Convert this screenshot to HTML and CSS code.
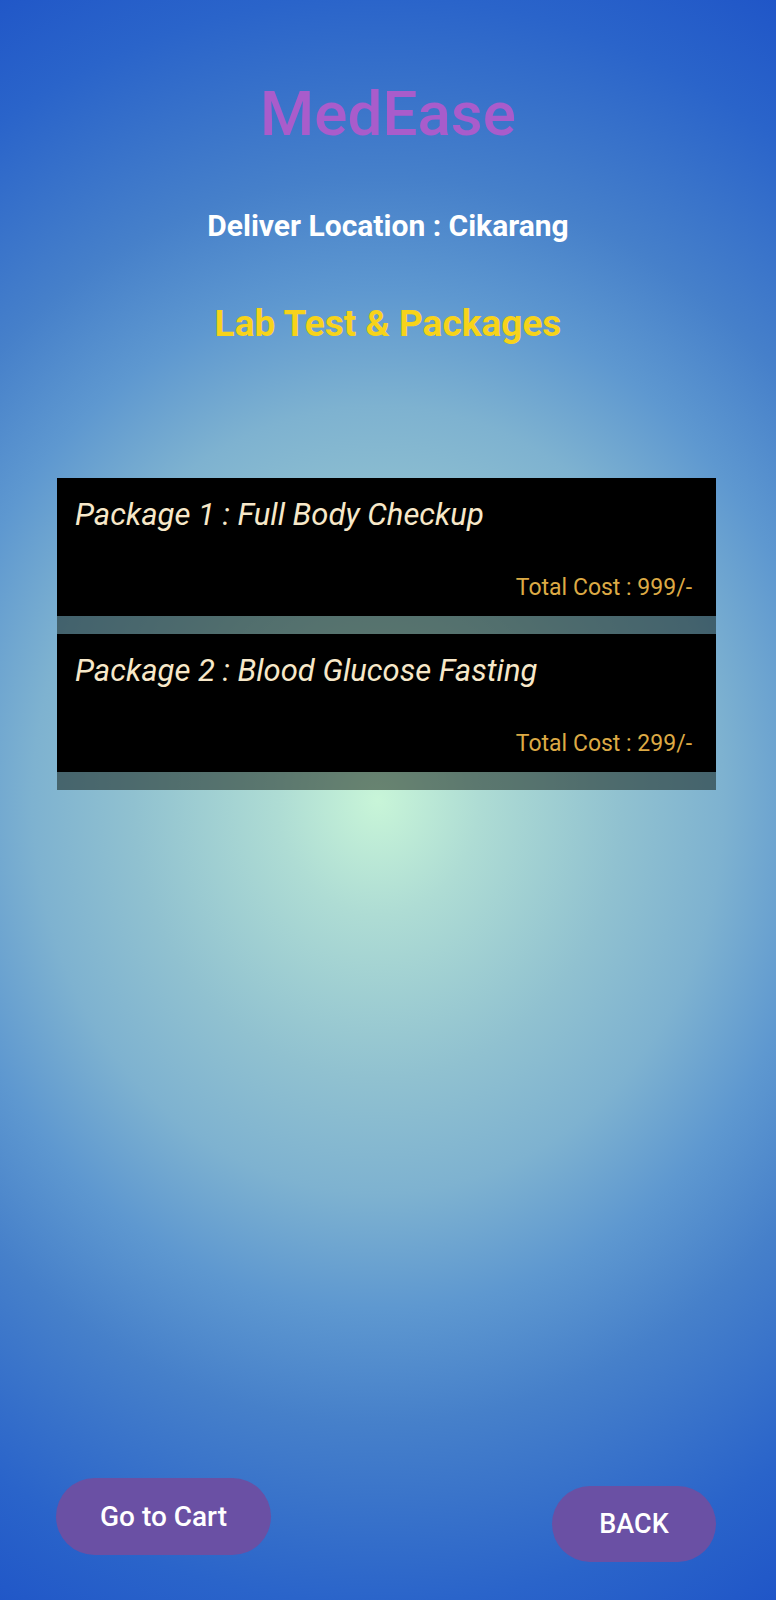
FILE: index.html
```html
<!DOCTYPE html>
<html lang="en">
<head>
<meta charset="utf-8">
<title>MedEase - Lab Test &amp; Packages</title>
<link rel="stylesheet" href="styles.css">
</head>
<body>
<div class="screen">
  <header class="header">
    <h1 class="brand">MedEase</h1>
    <p class="location">Deliver Location : Cikarang</p>
    <h2 class="section-title">Lab Test &amp; Packages</h2>
  </header>

  <ul class="packages">
    <li class="package">
      <div class="package-body">
        <div class="package-name">Package 1 : Full Body Checkup</div>
        <div class="package-cost">Total Cost : 999/-</div>
      </div>
    </li>
    <li class="package">
      <div class="package-body">
        <div class="package-name">Package 2 : Blood Glucose Fasting</div>
        <div class="package-cost">Total Cost : 299/-</div>
      </div>
    </li>
  </ul>

  <div class="spacer"></div>

  <footer class="actions">
    <button class="btn btn-cart">Go to Cart</button>
    <button class="btn btn-back">BACK</button>
  </footer>
</div>
</body>
</html>
```
FILE: styles.css
```css
html, body {
  margin: 0;
  padding: 0;
}

body {
  font-family: Roboto, "Noto Sans", sans-serif;
}

.screen {
  width: 776px;
  height: 1600px;
  box-sizing: border-box;
  display: flex;
  flex-direction: column;
  padding-top: 74px;
  background: radial-gradient(ellipse 720px 820px at 378px 800px,
    #c8f5d8 0%,
    #aedcd4 14%,
    #90c1d0 34%,
    #7eb2d0 48%,
    #5e98d0 62%,
    #4680ca 76%,
    #2a64ca 98%,
    #1a4ec6 120%);
}

.header {
  display: flex;
  flex-direction: column;
  align-items: center;
}

.brand {
  margin: 0;
  font-size: 62px;
  line-height: 80px;
  font-weight: 500;
  color: #a95ccb;
}

.location {
  margin: 52px 0 0;
  font-size: 30px;
  line-height: 40px;
  font-weight: 700;
  color: #ffffff;
}

.section-title {
  margin: 53px 0 0;
  font-size: 37px;
  line-height: 50px;
  font-weight: 700;
  color: #f7d31a;
}

.packages {
  list-style: none;
  margin: 129px 0 0 57px;
  padding: 0;
  width: 659px;
}

.package {
  padding-bottom: 18px;
  background: rgba(10, 20, 10, 0.5);
}

.package-body {
  height: 138px;
  box-sizing: border-box;
  padding: 17px 24px 13px 18px;
  background: #000;
  display: flex;
  flex-direction: column;
  justify-content: space-between;
}

.package-name {
  font-size: 31px;
  line-height: 40px;
  font-style: italic;
  color: #f7e8c9;
}

.package-cost {
  align-self: flex-end;
  font-size: 23px;
  line-height: 30px;
  color: #dcaa45;
}

.spacer {
  flex: 1;
}

.actions {
  display: flex;
  justify-content: space-between;
  align-items: flex-start;
  padding: 0 60px 38px 56px;
}

.btn {
  border: none;
  border-radius: 40px;
  background: #6a50a4;
  color: #ffffff;
  font-family: Roboto, "Noto Sans", sans-serif;
  font-weight: 500;
  font-size: 27px;
  padding: 0;
}

.btn-cart {
  width: 215px;
  height: 77px;
  font-size: 28px;
}

.btn-back {
  width: 164px;
  height: 76px;
  margin-top: 8px;
}
```
